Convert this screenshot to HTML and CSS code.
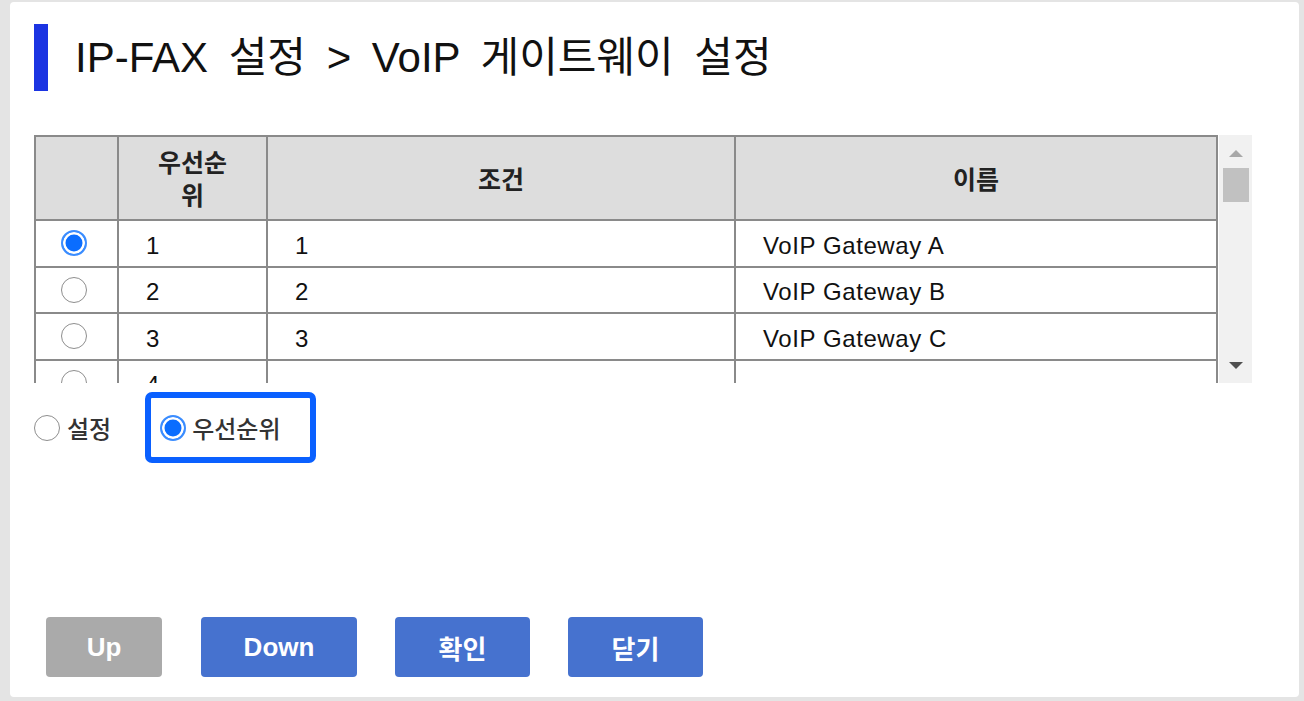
FILE: index.html
```html
<!DOCTYPE html>
<html lang="ko">
<head>
<meta charset="utf-8">
<title>IP-FAX 설정 &gt; VoIP 게이트웨이 설정</title>
<link rel="stylesheet" href="styles.css">
</head>
<body>
<div class="dialog">
  <div class="title-row">
    <span class="title-bar"></span>
    <h1 class="title">IP-FAX 설정 &gt; VoIP 게이트웨이 설정</h1>
  </div>

  <div class="list">
    <div class="list-view">
      <table class="grid">
        <colgroup>
          <col class="c-sel"><col class="c-pri"><col class="c-cond"><col class="c-name">
        </colgroup>
        <thead>
          <tr><th></th><th>우선순<br>위</th><th>조건</th><th>이름</th></tr>
        </thead>
        <tbody>
          <tr><td class="sel"><input type="radio" name="gw" class="radio" checked></td><td>1</td><td>1</td><td>VoIP Gateway A</td></tr>
          <tr><td class="sel"><input type="radio" name="gw" class="radio"></td><td>2</td><td>2</td><td>VoIP Gateway B</td></tr>
          <tr><td class="sel"><input type="radio" name="gw" class="radio"></td><td>3</td><td>3</td><td>VoIP Gateway C</td></tr>
          <tr><td class="sel"><input type="radio" name="gw" class="radio"></td><td>4</td><td></td><td></td></tr>
        </tbody>
      </table>
    </div>
    <div class="scrollbar">
      <span class="arrow-up"></span>
      <span class="thumb"></span>
      <span class="arrow-down"></span>
    </div>
  </div>

  <div class="mode">
    <label class="opt"><input type="radio" name="mode" class="radio">설정</label>
    <label class="opt focus"><input type="radio" name="mode" class="radio" checked>우선순위</label>
  </div>

  <div class="actions">
    <button class="btn btn-up" disabled>Up</button>
    <button class="btn btn-down">Down</button>
    <button class="btn btn-ok">확인</button>
    <button class="btn btn-close">닫기</button>
  </div>
</div>
</body>
</html>
```

FILE: styles.css
```css
* { box-sizing: border-box; }

html, body { margin: 0; }

body {
  width: 1304px;
  height: 701px;
  overflow: hidden;
  background: #e4e4e4;
  padding: 2px 0 0 10px;
  font-family: "Liberation Sans", "Noto Sans CJK KR", sans-serif;
  color: #111;
}

.dialog {
  width: 1289px;
  height: 695px;
  background: #fff;
  border-radius: 4px;
  padding: 22px 0 0 24px;
  display: flex;
  flex-direction: column;
}

/* title */
.title-row {
  display: flex;
  align-items: center;
  gap: 27px;
  height: 67px;
}
.title-bar {
  flex: none;
  width: 14px;
  height: 67px;
  background: #1b34e2;
}
.title {
  margin: 0;
  font-size: 42px;
  font-weight: 400;
  line-height: 1;
  word-spacing: 9px;
  color: #111;
}

/* list */
.list {
  display: flex;
  gap: 1px;
  margin-top: 44px;
  height: 248px;
}
.list-view {
  width: 1184px;
  height: 248px;
  overflow: hidden;
}
.grid {
  width: 1184px;
  border-collapse: collapse;
  table-layout: fixed;
}
.c-sel { width: 83px; }
.c-pri { width: 149px; }
.c-cond { width: 468px; }
.c-name { width: 482px; }

.grid th {
  height: 84px;
  padding: 0;
  background: #dddddd;
  border: 2px solid #8a8a8a;
  font-family: "Noto Sans CJK KR", "Liberation Sans", sans-serif;
  font-size: 25px;
  font-weight: 700;
  line-height: 33px;
  color: #222;
  text-align: center;
}
.grid td {
  height: 46.5px;
  padding: 5px 0 0 27px;
  border: 2px solid #8a8a8a;
  font-size: 24px;
  letter-spacing: 0.6px;
  color: #111;
  white-space: nowrap;
}
.grid td.sel { padding: 0; }
.grid td.sel .radio {
  display: block;
  margin-left: 25px;
}

/* fake scrollbar */
.scrollbar {
  width: 33px;
  height: 248px;
  background: #f1f1f1;
  display: flex;
  flex-direction: column;
  align-items: center;
  padding: 15px 0 14px;
}
.arrow-up {
  width: 0;
  height: 0;
  border-left: 7px solid transparent;
  border-right: 7px solid transparent;
  border-bottom: 7px solid #a8a8a8;
}
.thumb {
  width: 26px;
  height: 34px;
  margin-top: 11px;
  background: #c1c1c1;
}
.arrow-down {
  width: 0;
  height: 0;
  margin-top: auto;
  border-left: 7px solid transparent;
  border-right: 7px solid transparent;
  border-top: 7px solid #505050;
}

/* radios */
.radio {
  -webkit-appearance: none;
  appearance: none;
  flex: none;
  width: 26px;
  height: 26px;
  margin: 0;
  border: 1.5px solid #8e8e8e;
  border-radius: 50%;
  background: #fff;
}
.radio:checked {
  border: 2px solid #3b8dff;
  background: #0a6dff;
  box-shadow: inset 0 0 0 2.5px #fff;
}

/* mode selection */
.mode {
  display: flex;
  align-items: center;
  gap: 34px;
  margin-top: 9px;
  height: 71px;
}
.opt {
  display: flex;
  align-items: center;
  gap: 7px;
  font-family: "Noto Sans CJK KR", "Liberation Sans", sans-serif;
  font-size: 24px;
  font-weight: 500;
  color: #333;
}
.opt.focus {
  width: 171px;
  height: 71px;
  gap: 6px;
  padding-left: 9px;
  border: 6px solid #0a60ff;
  border-radius: 7px;
}

/* buttons */
.actions {
  display: flex;
  gap: 38px;
  margin-top: auto;
  margin-bottom: 20px;
  padding-left: 12px;
}
.btn {
  height: 60px;
  padding: 0;
  border: 0;
  border-radius: 4px;
  background: #4672cf;
  color: #fff;
  font-family: "Liberation Sans", "Noto Sans CJK KR", sans-serif;
  font-size: 26px;
  font-weight: 700;
}
.btn:disabled { background: #aaaaaa; }
.btn-up { width: 116px; margin-right: 1px; }
.btn-down { width: 156px; }
.btn-ok { width: 135px; }
.btn-close { width: 135px; }
```
